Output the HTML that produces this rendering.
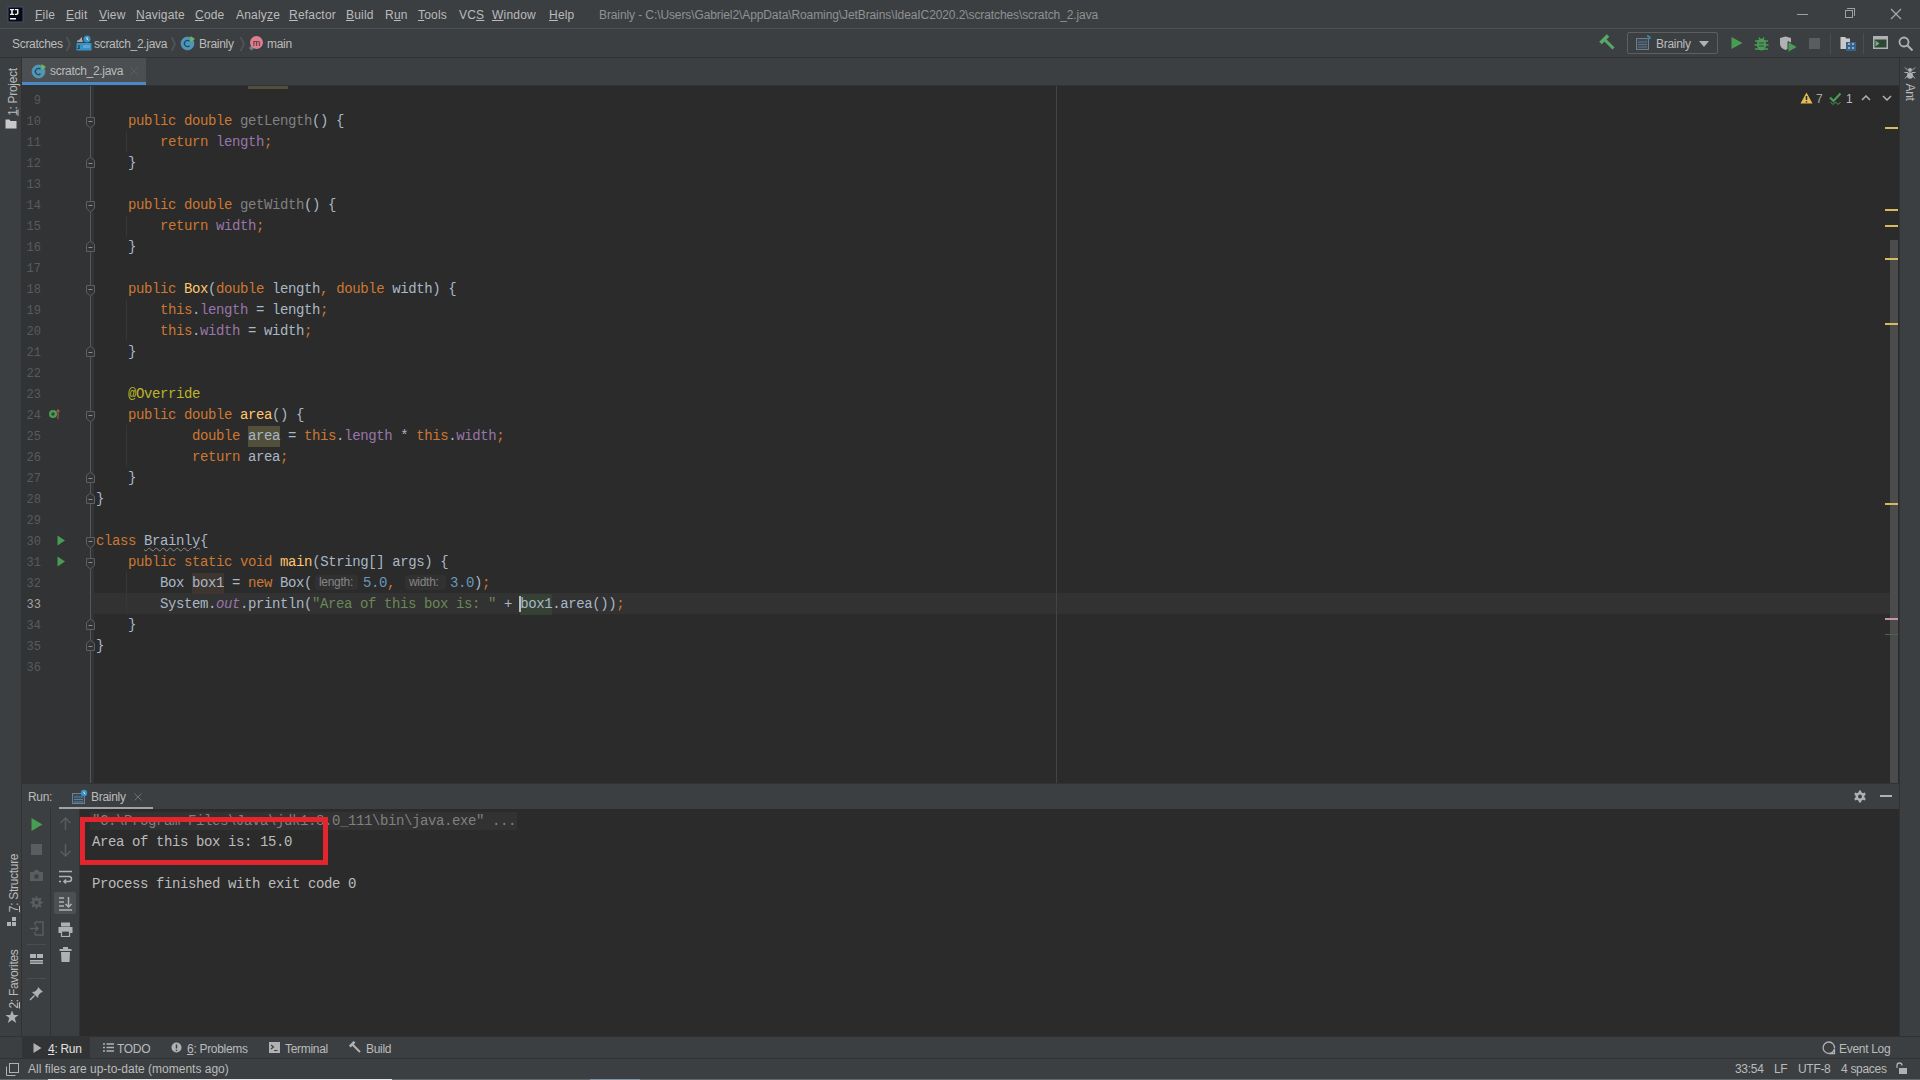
<!DOCTYPE html>
<html><head><meta charset="utf-8">
<style>
*{margin:0;padding:0;box-sizing:border-box}
html,body{width:1920px;height:1080px;overflow:hidden;background:#3c3f41;font-family:"Liberation Sans",sans-serif;color:#bbbbbb}
.a{position:absolute}
#title{left:0;top:0;width:1920px;height:29px;background:#3c3f41;border-bottom:1px solid #4f5254}
#nav{left:0;top:29px;width:1920px;height:29px;background:#3c3f41;border-bottom:1px solid #323232}
#lstripe{left:0;top:58px;width:22px;height:979px;background:#3c3f41;border-right:1px solid #323232}
#rstripe{left:1899px;top:58px;width:21px;height:979px;background:#3c3f41;border-left:1px solid #323232}
#tabs{left:22px;top:58px;width:1877px;height:28px;background:#3c3f41;border-bottom:1px solid #323232}
#editor{left:22px;top:86px;width:1877px;height:697px;background:#2b2b2b;overflow:hidden}
#gutter{left:0;top:0;width:72px;height:697px;background:#313335}
#runhdr{left:22px;top:783px;width:1877px;height:26px;background:#3c3f41;border-top:1px solid #323232}
#runtb1{left:22px;top:809px;width:29px;height:228px;background:#3c3f41;border-right:1px solid #323232}
#runtb2{left:51px;top:809px;width:29px;height:228px;background:#3c3f41;border-right:1px solid #323232}
#console{left:80px;top:809px;width:1819px;height:228px;background:#2b2b2b}
#bbar{left:0;top:1036px;width:1920px;height:22px;background:#3c3f41;border-top:1px solid #323232}
#status{left:0;top:1058px;width:1920px;height:22px;background:#3c3f41;border-top:1px solid #323232}
.ui{font-size:12px;line-height:14px;letter-spacing:-0.3px;color:#bbbbbb;white-space:nowrap}
.code{font-family:"Liberation Mono",monospace;font-size:14px;letter-spacing:-0.4px;white-space:pre;color:#a9b7c6}
.ln{font-family:"Liberation Mono",monospace;font-size:12.5px;color:#606366;text-align:right;width:20px}
.k{color:#cc7832}.f{color:#9876aa}.m{color:#ffc66d}.s{color:#6a8759}.n{color:#6897bb}.an{color:#bbb529}.g{color:#808080}
.ln{position:absolute;left:0;width:19px;margin-top:1.5px;font-family:"Liberation Mono",monospace;font-size:12px;line-height:21px;color:#585b5e;text-align:right}
.ln.cur{color:#a4a3a3}
.cl{left:74px;line-height:21px}
.code{line-height:21px;margin-top:1px}
.hl,.hl2,.hlw{display:inline-block;vertical-align:top;height:21px;line-height:21px}
.hl{background:#52503a}
.hl2{background:#344134}
.hlw{background:#3e3530}
.wavy{text-decoration:underline wavy #8c8c8c;text-decoration-thickness:1px;text-underline-offset:2px}
.fi{font-style:italic;color:#9876aa}
.hint{font-family:"Liberation Sans",sans-serif;font-size:12px;letter-spacing:-0.3px;color:#858585;background:#313131;border-radius:3px;height:15px;line-height:15px;padding-left:4px;white-space:nowrap}
.menu{letter-spacing:0.2px}
</style></head><body>
<div id="title" class="a">
<svg class="a" style="left:7px;top:6px" width="17" height="17"><rect x="0.5" y="0.5" width="16" height="16" fill="#3e5070"/><rect x="1.5" y="1.5" width="14" height="14" fill="#080a16"/><path d="M3 3H7V4.3H5.8V7.7H7V9H3V7.7H4.2V4.3H3Z" fill="#f0f0f0"/><path d="M7.8 3H11.5V7.3C11.5 8.4 10.7 9 9.6 9H7.8V7.7H9.3C9.8 7.7 10 7.5 10 7V4.3H7.8Z" fill="#f0f0f0"/><rect x="3" y="12" width="6" height="1.5" fill="#f0f0f0"/></svg>
<div class="a ui menu" style="left:35px;top:8px"><u>F</u>ile</div>
<div class="a ui menu" style="left:66px;top:8px"><u>E</u>dit</div>
<div class="a ui menu" style="left:99px;top:8px"><u>V</u>iew</div>
<div class="a ui menu" style="left:136px;top:8px"><u>N</u>avigate</div>
<div class="a ui menu" style="left:195px;top:8px"><u>C</u>ode</div>
<div class="a ui menu" style="left:236px;top:8px">Analy<u>z</u>e</div>
<div class="a ui menu" style="left:289px;top:8px"><u>R</u>efactor</div>
<div class="a ui menu" style="left:346px;top:8px"><u>B</u>uild</div>
<div class="a ui menu" style="left:385px;top:8px">R<u>u</u>n</div>
<div class="a ui menu" style="left:418px;top:8px"><u>T</u>ools</div>
<div class="a ui menu" style="left:459px;top:8px">VC<u>S</u></div>
<div class="a ui menu" style="left:492px;top:8px"><u>W</u>indow</div>
<div class="a ui menu" style="left:549px;top:8px"><u>H</u>elp</div>
<div class="a ui" style="left:599px;top:8px;color:#8f9193;letter-spacing:-0.1px">Brainly - C:\Users\Gabriel2\AppData\Roaming\JetBrains\IdeaIC2020.2\scratches\scratch_2.java</div>
<div class="a" style="left:1797px;top:14px;width:11px;height:1px;background:#a0a0a0"></div>
<div class="a" style="left:1845px;top:10px;width:8px;height:8px;border:1px solid #a0a0a0"></div>
<div class="a" style="left:1847px;top:8px;width:8px;height:8px;border-top:1px solid #a0a0a0;border-right:1px solid #a0a0a0"></div>
<svg class="a" style="left:1890px;top:8px" width="12" height="12"><path d="M1 1L11 11M11 1L1 11" stroke="#a8a8a8" stroke-width="1.2"/></svg>
</div>
<div id="nav" class="a">
<div class="a ui" style="left:12px;top:8px">Scratches</div>
<svg class="a" style="left:65px;top:5px" width="7" height="20"><path d="M1.5 3L5 10L1.5 17" stroke="#505355" stroke-width="1.8" fill="none"/></svg>
<svg class="a" style="left:76px;top:6px" width="16" height="16"><rect x="0.5" y="8" width="15" height="7.5" fill="#3592c4"/><path d="M3 10V13.5H1.5" stroke="#1f3a4d" stroke-width="1.2" fill="none"/><rect x="7" y="10" width="7" height="3" fill="#5aa4d6"/><path d="M1 7L6 2V7Z" fill="#c6a3a3"/><circle cx="11" cy="4" r="3.5" fill="#3592c4"/><path d="M11 2V4.3L12.5 5.2" stroke="#e8f0f5" stroke-width="1" fill="none"/><rect x="1" y="5.5" width="6" height="1.5" fill="#9aa7b0"/></svg>
<div class="a ui" style="left:94px;top:8px">scratch_2.java</div>
<svg class="a" style="left:170px;top:5px" width="7" height="20"><path d="M1.5 3L5 10L1.5 17" stroke="#505355" stroke-width="1.8" fill="none"/></svg>
<svg class="a" style="left:180px;top:6px" width="16" height="16"><circle cx="7.5" cy="8.5" r="6.5" fill="#4f97b8"/><circle cx="7.5" cy="8.5" r="6.5" fill="none" stroke="#6aa7c4" stroke-width="0.5"/><path d="M9.5 6.3A3 3 0 1 0 9.5 10.7" stroke="#1d4a5e" stroke-width="1.3" fill="none"/><path d="M10.5 1L15 4L10.5 7Z" fill="#6dba5a"/></svg>
<div class="a ui" style="left:199px;top:8px">Brainly</div>
<svg class="a" style="left:239px;top:5px" width="7" height="20"><path d="M1.5 3L5 10L1.5 17" stroke="#505355" stroke-width="1.8" fill="none"/></svg>
<svg class="a" style="left:248px;top:6px" width="16" height="16"><circle cx="8.5" cy="7.5" r="6.5" fill="#f98b9e" fill-opacity="0.85"/><text x="8.5" y="10.5" font-family="Liberation Sans" font-size="9" fill="#3c1f24" text-anchor="middle">m</text><path d="M1 13L3.5 15.5L6 13L3.5 10.5Z" fill="#9aa7b0" fill-opacity="0.6"/></svg>
<div class="a ui" style="left:267px;top:8px">main</div>
<svg class="a" style="left:1599px;top:5px" width="17" height="17"><path d="M1.5 9L9 1.5" stroke="#59a869" stroke-width="3.5"/><path d="M5 5L14.5 14.5" stroke="#59a869" stroke-width="3"/></svg>
<div class="a" style="left:1627px;top:3px;width:91px;height:22px;border:1px solid #5e6060;border-radius:2px"></div>
<svg class="a" style="left:1636px;top:6px" width="16" height="16"><rect x="0.5" y="3.5" width="12" height="11" fill="#3d4a55" stroke="#6c7e8c"/><path d="M2 7H11M2 9.5H11M2 12H11" stroke="#6c7e8c" stroke-width="0.8"/><path d="M11 1A3 3 0 0 1 14 4" stroke="#3592c4" stroke-width="1.5" fill="none"/></svg>
<div class="a ui" style="left:1656px;top:8px">Brainly</div>
<svg class="a" style="left:1699px;top:12px" width="10" height="6"><path d="M0 0H10L5 6Z" fill="#afb1b3"/></svg>
<svg class="a" style="left:1731px;top:8px" width="12" height="12"><path d="M0.5 0L11.5 6L0.5 12Z" fill="#499c54"/></svg>
<svg class="a" style="left:1754px;top:7px" width="15" height="15"><ellipse cx="7.5" cy="8.5" rx="4.5" ry="6" fill="#499c54"/><path d="M1 5H14M0.5 9H14.5M1 13H14M5 1.5L6 3.5M10 1.5L9 3.5" stroke="#499c54" stroke-width="1.5"/><path d="M5 7H10M5 10H10" stroke="#3c3f41" stroke-width="1.2"/></svg>
<svg class="a" style="left:1779px;top:7px" width="20" height="18"><path d="M1 2L6.5 0.5L12 2V8C12 11 9.5 13 6.5 14C3.5 13 1 11 1 8Z" fill="#afb1b3"/><path d="M6.5 0.5V14" stroke="#3c3f41" stroke-width="0"/><path d="M9 5.5L18.5 11L9 16.5Z" fill="#499c54" stroke="#3c3f41" stroke-width="1"/></svg>
<div class="a" style="left:1809px;top:9px;width:11px;height:11px;background:#5a5c5e"></div>
<div class="a" style="left:1830px;top:4px;width:1px;height:21px;background:#4b4d4f"></div>
<svg class="a" style="left:1840px;top:7px" width="17" height="16"><path d="M0.5 1H5L6.5 2.5H10V13H0.5Z" fill="#c9c9c9"/><rect x="6" y="6" width="10" height="9" fill="#3d6185"/><path d="M8 8H10M12 8H14M8 12H10M12 12H14" stroke="#7fb1dc" stroke-width="2"/></svg>
<div class="a" style="left:1863px;top:4px;width:1px;height:21px;background:#4b4d4f"></div>
<svg class="a" style="left:1873px;top:7px" width="15" height="13"><rect x="0.75" y="0.75" width="13.5" height="11.5" fill="#2f4536" stroke="#afb1b3" stroke-width="1.5"/><rect x="1" y="1" width="13" height="2.5" fill="#afb1b3"/><path d="M2.5 4.5L6.5 7.5L2.5 10.5Z" fill="#6cb37a"/></svg>
<svg class="a" style="left:1898px;top:7px" width="16" height="16"><circle cx="6" cy="6" r="4.5" stroke="#afb1b3" stroke-width="1.8" fill="none"/><path d="M9.5 9.5L14.5 14.5" stroke="#afb1b3" stroke-width="2"/></svg>
</div>
<div id="lstripe" class="a">
<div class="a ui vt" style="left:-16.5px;top:27px;width:57px;text-align:center;transform:rotate(-90deg)"><u>1</u>: Project</div>
<svg class="a" style="left:5px;top:61px" width="12" height="10"><path d="M0.5 0.5H4.5L5.5 2H11.5V9.5H0.5Z" fill="#c9c9c9"/></svg>
<div class="a ui vt" style="left:-22.5px;top:818px;width:72px;text-align:center;transform:rotate(-90deg)"><u>7</u>: Structure</div>
<svg class="a" style="left:7px;top:859px" width="10" height="10"><rect x="5" y="0" width="4" height="4" fill="#afb1b3"/><rect x="0" y="5" width="4" height="4" fill="#afb1b3"/><rect x="5" y="5" width="4" height="4" fill="#afb1b3"/></svg>
<div class="a ui vt" style="left:-22.5px;top:914px;width:72px;text-align:center;transform:rotate(-90deg)"><u>2</u>: Favorites</div>
<svg class="a" style="left:5px;top:952px" width="14" height="14"><path d="M7 0.5L8.8 5H13.5L9.7 8L11.2 13L7 10L2.8 13L4.3 8L0.5 5H5.2Z" fill="#afb1b3"/></svg>
</div>
<div id="rstripe" class="a">
<svg class="a" style="left:4px;top:9px" width="12" height="12"><circle cx="6" cy="3" r="2" fill="#afb1b3"/><ellipse cx="6" cy="8.5" rx="3" ry="3.2" fill="#afb1b3"/><path d="M1 0.5L4 3.5M11 0.5L8 3.5M0.5 5.5H4M11.5 5.5H8M1 11.5L3.5 8.5M11 11.5L8.5 8.5" stroke="#afb1b3" stroke-width="1"/></svg>
<div class="a ui" style="left:-3px;top:27px;width:26px;text-align:center;transform:rotate(90deg)">Ant</div>
</div>
<div id="tabs" class="a">
<div class="a" style="left:0;top:0;width:124px;height:27px;background:#4b4f51"></div>
<div class="a" style="left:0;top:24px;width:124px;height:3px;background:#4a88c7"></div>
<svg class="a" style="left:9px;top:5px" width="16" height="16"><circle cx="7.5" cy="8.5" r="6.5" fill="#4f97b8"/><circle cx="7.5" cy="8.5" r="6.5" fill="none" stroke="#6aa7c4" stroke-width="0.5"/><path d="M9.5 6.3A3 3 0 1 0 9.5 10.7" stroke="#1d4a5e" stroke-width="1.3" fill="none"/><path d="M10.5 1L15 4L10.5 7Z" fill="#6dba5a"/></svg>
<div class="a ui" style="left:28px;top:6px">scratch_2.java</div>
<svg class="a" style="left:108px;top:9px" width="8" height="8"><path d="M0.5 0.5L7.5 7.5M7.5 0.5L0.5 7.5" stroke="#5a5c5e" stroke-width="1"/></svg>
</div>
<div id="editor" class="a">
<div id="gutter" class="a"></div>
<div class="a" style="left:72px;top:507px;width:1796px;height:21px;background:#323232"></div>
<div class="a" style="left:226px;top:0px;width:40px;height:3px;background:#52503a"></div>
<div class="a" style="left:68px;top:0;width:1px;height:697px;background:#555759"></div>
<div class="a" style="left:1034px;top:0;width:1px;height:697px;background:#444444"></div><div class="a" style="left:104px;top:45px;width:1px;height:21px;background:#373737"></div><div class="a" style="left:104px;top:129px;width:1px;height:21px;background:#373737"></div><div class="a" style="left:104px;top:213px;width:1px;height:42px;background:#373737"></div><div class="a" style="left:104px;top:339px;width:1px;height:42px;background:#373737"></div><div class="a" style="left:104px;top:486px;width:1px;height:42px;background:#373737"></div>
<svg class="a" style="left:63px;top:31px" width="11" height="12"><path d="M1.5 0.5H9.5V7.5L5.5 11L1.5 7.5Z" fill="#313335" stroke="#5d5f61"/><path d="M3.5 4.5H7.5" stroke="#8a8a8a"/></svg><svg class="a" style="left:63px;top:115px" width="11" height="12"><path d="M1.5 0.5H9.5V7.5L5.5 11L1.5 7.5Z" fill="#313335" stroke="#5d5f61"/><path d="M3.5 4.5H7.5" stroke="#8a8a8a"/></svg><svg class="a" style="left:63px;top:199px" width="11" height="12"><path d="M1.5 0.5H9.5V7.5L5.5 11L1.5 7.5Z" fill="#313335" stroke="#5d5f61"/><path d="M3.5 4.5H7.5" stroke="#8a8a8a"/></svg><svg class="a" style="left:63px;top:325px" width="11" height="12"><path d="M1.5 0.5H9.5V7.5L5.5 11L1.5 7.5Z" fill="#313335" stroke="#5d5f61"/><path d="M3.5 4.5H7.5" stroke="#8a8a8a"/></svg><svg class="a" style="left:63px;top:451px" width="11" height="12"><path d="M1.5 0.5H9.5V7.5L5.5 11L1.5 7.5Z" fill="#313335" stroke="#5d5f61"/><path d="M3.5 4.5H7.5" stroke="#8a8a8a"/></svg><svg class="a" style="left:63px;top:472px" width="11" height="12"><path d="M1.5 0.5H9.5V7.5L5.5 11L1.5 7.5Z" fill="#313335" stroke="#5d5f61"/><path d="M3.5 4.5H7.5" stroke="#8a8a8a"/></svg><svg class="a" style="left:63px;top:70px" width="11" height="12"><path d="M1.5 11.5H9.5V4.5L5.5 1L1.5 4.5Z" fill="#313335" stroke="#5d5f61"/><path d="M3.5 7.5H7.5" stroke="#8a8a8a"/></svg><svg class="a" style="left:63px;top:154px" width="11" height="12"><path d="M1.5 11.5H9.5V4.5L5.5 1L1.5 4.5Z" fill="#313335" stroke="#5d5f61"/><path d="M3.5 7.5H7.5" stroke="#8a8a8a"/></svg><svg class="a" style="left:63px;top:259px" width="11" height="12"><path d="M1.5 11.5H9.5V4.5L5.5 1L1.5 4.5Z" fill="#313335" stroke="#5d5f61"/><path d="M3.5 7.5H7.5" stroke="#8a8a8a"/></svg><svg class="a" style="left:63px;top:385px" width="11" height="12"><path d="M1.5 11.5H9.5V4.5L5.5 1L1.5 4.5Z" fill="#313335" stroke="#5d5f61"/><path d="M3.5 7.5H7.5" stroke="#8a8a8a"/></svg><svg class="a" style="left:63px;top:406px" width="11" height="12"><path d="M1.5 11.5H9.5V4.5L5.5 1L1.5 4.5Z" fill="#313335" stroke="#5d5f61"/><path d="M3.5 7.5H7.5" stroke="#8a8a8a"/></svg><svg class="a" style="left:63px;top:532px" width="11" height="12"><path d="M1.5 11.5H9.5V4.5L5.5 1L1.5 4.5Z" fill="#313335" stroke="#5d5f61"/><path d="M3.5 7.5H7.5" stroke="#8a8a8a"/></svg><svg class="a" style="left:63px;top:553px" width="11" height="12"><path d="M1.5 11.5H9.5V4.5L5.5 1L1.5 4.5Z" fill="#313335" stroke="#5d5f61"/><path d="M3.5 7.5H7.5" stroke="#8a8a8a"/></svg>
<div class="a ln" style="top:3px">9</div>
<div class="a ln" style="top:24px">10</div>
<div class="a ln" style="top:45px">11</div>
<div class="a ln" style="top:66px">12</div>
<div class="a ln" style="top:87px">13</div>
<div class="a ln" style="top:108px">14</div>
<div class="a ln" style="top:129px">15</div>
<div class="a ln" style="top:150px">16</div>
<div class="a ln" style="top:171px">17</div>
<div class="a ln" style="top:192px">18</div>
<div class="a ln" style="top:213px">19</div>
<div class="a ln" style="top:234px">20</div>
<div class="a ln" style="top:255px">21</div>
<div class="a ln" style="top:276px">22</div>
<div class="a ln" style="top:297px">23</div>
<div class="a ln" style="top:318px">24</div>
<div class="a ln" style="top:339px">25</div>
<div class="a ln" style="top:360px">26</div>
<div class="a ln" style="top:381px">27</div>
<div class="a ln" style="top:402px">28</div>
<div class="a ln" style="top:423px">29</div>
<div class="a ln" style="top:444px">30</div>
<div class="a ln" style="top:465px">31</div>
<div class="a ln" style="top:486px">32</div>
<div class="a ln cur" style="top:507px">33</div>
<div class="a ln" style="top:528px">34</div>
<div class="a ln" style="top:549px">35</div>
<div class="a ln" style="top:570px">36</div>
<div class="a code cl" style="top:24px">    <span class="k">public</span> <span class="k">double</span> <span class="g">getLength</span>() {</div>
<div class="a code cl" style="top:45px">        <span class="k">return</span> <span class="f">length</span><span class="k">;</span></div>
<div class="a code cl" style="top:66px">    }</div>
<div class="a code cl" style="top:108px">    <span class="k">public</span> <span class="k">double</span> <span class="g">getWidth</span>() {</div>
<div class="a code cl" style="top:129px">        <span class="k">return</span> <span class="f">width</span><span class="k">;</span></div>
<div class="a code cl" style="top:150px">    }</div>
<div class="a code cl" style="top:192px">    <span class="k">public</span> <span class="m">Box</span>(<span class="k">double</span> length<span class="k">,</span> <span class="k">double</span> width) {</div>
<div class="a code cl" style="top:213px">        <span class="k">this</span>.<span class="f">length</span> = length<span class="k">;</span></div>
<div class="a code cl" style="top:234px">        <span class="k">this</span>.<span class="f">width</span> = width<span class="k">;</span></div>
<div class="a code cl" style="top:255px">    }</div>
<div class="a code cl" style="top:297px">    <span class="an">@Override</span></div>
<div class="a code cl" style="top:318px">    <span class="k">public</span> <span class="k">double</span> <span class="m">area</span>() {</div>
<div class="a code cl" style="top:339px">            <span class="k">double</span> <span class="hl">area</span> = <span class="k">this</span>.<span class="f">length</span> * <span class="k">this</span>.<span class="f">width</span><span class="k">;</span></div>
<div class="a code cl" style="top:360px">            <span class="k">return</span> area<span class="k">;</span></div>
<div class="a code cl" style="top:381px">    }</div>
<div class="a code cl" style="top:402px">}</div>
<div class="a code cl" style="top:444px"><span class="k">class</span> <span class="wavy">Brainly</span>{</div>
<div class="a code cl" style="top:465px">    <span class="k">public</span> <span class="k">static</span> <span class="k">void</span> <span class="m">main</span>(String[] args) {</div>
<div class="a code cl" style="top:507px">        System.<span class="fi">out</span>.println(<span class="s">&quot;Area of this box is: &quot;</span> + <span class="hl2">box1</span>.area())<span class="k">;</span></div>
<div class="a code cl" style="top:528px">    }</div>
<div class="a code cl" style="top:549px">}</div>
<div class="a code cl" style="top:486px">        Box <span class="hlw">box1</span> = <span class="k">new</span> Box(</div><div class="a hint" style="left:293px;top:489px;width:43px">length:</div><div class="a code" style="left:341px;top:486px"><span class="n">5.0</span><span class="k">,</span></div><div class="a hint" style="left:383px;top:489px;width:41px">width:</div><div class="a code" style="left:428px;top:486px"><span class="n">3.0</span>)<span class="k">;</span></div>
<svg class="a" style="left:26px;top:322px" width="12" height="12"><circle cx="5" cy="6" r="4" fill="#499c54"/><path d="M5 4V8M3 6H7" stroke="#1e3b22" stroke-width="1"/><path d="M10 11V2M8.5 4L10 1.5L11.5 4" stroke="#c75450" stroke-width="1" fill="none"/></svg>
<svg class="a" style="left:35px;top:449px" width="9" height="11"><path d="M0.5 0.5L8 5.5L0.5 10.5Z" fill="#499c54"/></svg>
<svg class="a" style="left:35px;top:470px" width="9" height="11"><path d="M0.5 0.5L8 5.5L0.5 10.5Z" fill="#499c54"/></svg>
<div class="a" style="left:497px;top:510px;width:2px;height:16px;background:#bbbbbb"></div>
<svg class="a" style="left:1778px;top:6px" width="13" height="12"><path d="M6.5 0.5L12.5 11.5H0.5Z" fill="#e0bd50"/><path d="M6.5 4V8M6.5 9.3V10.5" stroke="#2b2b2b" stroke-width="1.5"/></svg>
<div class="a ui" style="left:1794px;top:6px;font-size:12px;color:#a8a8a8">7</div>
<svg class="a" style="left:1807px;top:6px" width="13" height="14"><path d="M1 5.5L4.5 9L11.5 1.5" stroke="#499c54" stroke-width="2.2" fill="none"/><path d="M1.5 10L4 12.5L6.5 10L9 12.5L11.5 10" stroke="#499c54" stroke-width="1" fill="none"/></svg>
<div class="a ui" style="left:1824px;top:6px;font-size:12px">1</div>
<svg class="a" style="left:1839px;top:9px" width="10" height="6"><path d="M1 5L5 1L9 5" stroke="#afb1b3" stroke-width="1.5" fill="none"/></svg>
<svg class="a" style="left:1860px;top:9px" width="10" height="6"><path d="M1 1L5 5L9 1" stroke="#afb1b3" stroke-width="1.5" fill="none"/></svg>
<div class="a" style="left:1868px;top:154px;width:8px;height:543px;background:#4b4b4b"></div>
<div class="a" style="left:1863px;top:41px;width:13px;height:2px;background:#d9b95f"></div>
<div class="a" style="left:1863px;top:123px;width:13px;height:2px;background:#d9b95f"></div>
<div class="a" style="left:1863px;top:139px;width:13px;height:2px;background:#d9b95f"></div>
<div class="a" style="left:1863px;top:172px;width:13px;height:2px;background:#d9b95f"></div>
<div class="a" style="left:1863px;top:237px;width:13px;height:2px;background:#d9b95f"></div>
<div class="a" style="left:1863px;top:417px;width:13px;height:2px;background:#d9b95f"></div>
<div class="a" style="left:1863px;top:532px;width:13px;height:2px;background:#c795a8"></div>
<div class="a" style="left:1863px;top:548px;width:13px;height:1px;background:#3f6b45"></div>
</div>
<div id="runhdr" class="a">
<div class="a ui" style="left:6px;top:6px">Run:</div>
<svg class="a" style="left:50px;top:5px" width="16" height="16"><rect x="0.5" y="4.5" width="12" height="10" fill="#3d4a55" stroke="#6c7e8c"/><path d="M2 8H11M2 10.5H11M2 13H11" stroke="#5a8bb0" stroke-width="0.9"/><circle cx="12" cy="4" r="3.2" fill="#3592c4"/><path d="M12 2.5V4.2L13.3 5" stroke="#e8f0f5" stroke-width="0.9" fill="none"/></svg>
<div class="a ui" style="left:69px;top:6px">Brainly</div>
<svg class="a" style="left:112px;top:9px" width="8" height="8"><path d="M0.5 0.5L7.5 7.5M7.5 0.5L0.5 7.5" stroke="#6e7072" stroke-width="1"/></svg>
<div class="a" style="left:37px;top:23px;width:94px;height:3px;background:#a0a3a6"></div>
<svg class="a" style="left:1831px;top:6px" width="14" height="14"><path fill="#afb1b3" d="M6 0.5H8L8.4 2.3A5 5 0 0 1 10 3.2L11.8 2.6L12.8 4.3L11.4 5.5A5 5 0 0 1 11.4 7.5L12.8 8.7L11.8 10.4L10 9.8A5 5 0 0 1 8.4 10.7L8 12.5H6L5.6 10.7A5 5 0 0 1 4 9.8L2.2 10.4L1.2 8.7L2.6 7.5A5 5 0 0 1 2.6 5.5L1.2 4.3L2.2 2.6L4 3.2A5 5 0 0 1 5.6 2.3Z"/><circle cx="7" cy="6.5" r="2" fill="#3c3f41"/></svg>
<div class="a" style="left:1858px;top:11px;width:12px;height:2px;background:#afb1b3"></div>
</div>
<div id="runtb1" class="a">
<svg class="a" style="left:9px;top:9px" width="12" height="13"><path d="M0.5 0L11.5 6.5L0.5 13Z" fill="#499c54"/></svg>
<div class="a" style="left:9px;top:35px;width:11px;height:11px;background:#5a5c5e"></div>
<svg class="a" style="left:7px;top:60px" width="15" height="13"><path d="M1 3H4.5L6 1H9L10.5 3H14V12H1Z" fill="#5a5c5e"/><circle cx="7.5" cy="7.5" r="2.3" fill="#3c3f41"/></svg>
<svg class="a" style="left:7px;top:86px" width="15" height="15"><path d="M7.5 0.5L9 3.5L12.5 2.5L11.5 6L14.5 7.5L11.5 9L12.5 12.5L9 11.5L7.5 14.5L6 11.5L2.5 12.5L3.5 9L0.5 7.5L3.5 6L2.5 2.5L6 3.5Z" fill="#5a5c5e"/><circle cx="7.5" cy="7.5" r="2" fill="#3c3f41"/></svg>
<svg class="a" style="left:7px;top:112px" width="15" height="15"><path d="M6 1H14V14H6M6 4V1M6 14V11" stroke="#5a5c5e" stroke-width="1.5" fill="none"/><path d="M1 7.5H9M6.5 5L9 7.5L6.5 10" stroke="#5a5c5e" stroke-width="1.5" fill="none"/></svg>
<div class="a" style="left:5px;top:135px;width:19px;height:1px;background:#4b4d4f"></div>
<svg class="a" style="left:7px;top:143px" width="15" height="14"><rect x="1" y="2" width="6" height="4" fill="#afb1b3"/><rect x="8" y="2" width="6" height="4" fill="#afb1b3"/><rect x="1" y="8" width="13" height="4" fill="#afb1b3"/><path d="M1 10H14" stroke="#3c3f41" stroke-width="0.8"/></svg>
<div class="a" style="left:5px;top:169px;width:19px;height:1px;background:#4b4d4f"></div>
<svg class="a" style="left:7px;top:177px" width="15" height="15"><path d="M9 1L14 6L12 6.5L9.5 9L9 12L3 6L6 5.5L8.5 3Z" fill="#afb1b3"/><path d="M5.5 9.5L1 14" stroke="#afb1b3" stroke-width="1.5"/></svg>
</div>
<div id="runtb2" class="a">
<svg class="a" style="left:8px;top:8px" width="13" height="14"><path d="M6.5 1V13M1.5 6L6.5 1L11.5 6" stroke="#5a5c5e" stroke-width="1.5" fill="none"/></svg>
<svg class="a" style="left:8px;top:34px" width="13" height="14"><path d="M6.5 1V13M1.5 8L6.5 13L11.5 8" stroke="#5a5c5e" stroke-width="1.5" fill="none"/></svg>
<svg class="a" style="left:7px;top:61px" width="15" height="14"><path d="M1 1.5H14M1 6.5H11A2.5 2.5 0 0 1 11 11.5H6M8 9.5L6 11.5L8 13.5M1 11.5H3" stroke="#afb1b3" stroke-width="1.5" fill="none"/></svg>
<div class="a" style="left:3px;top:83px;width:22px;height:22px;background:#4c5052;border-radius:2px"></div>
<svg class="a" style="left:7px;top:87px" width="15" height="15"><path d="M1 2H6M1 6H6M1 10H6M1 14H14M10.5 1V11M7.5 8L10.5 11L13.5 8" stroke="#afb1b3" stroke-width="1.5" fill="none"/></svg>
<svg class="a" style="left:7px;top:113px" width="15" height="15"><rect x="3" y="0.5" width="9" height="4" fill="#afb1b3"/><rect x="0.5" y="5" width="14" height="6" fill="#afb1b3"/><rect x="3.5" y="9" width="8" height="5.5" fill="#3c3f41" stroke="#afb1b3" stroke-width="1.2"/></svg>
<svg class="a" style="left:8px;top:138px" width="13" height="16"><rect x="0.5" y="2" width="12" height="2" fill="#afb1b3"/><rect x="4" y="0" width="5" height="2" fill="#afb1b3"/><path d="M2 5H11L10.5 15H2.5Z" fill="#afb1b3"/></svg>
</div>
<div id="console" class="a">
<div class="a" style="left:10px;top:3px;width:427px;height:18px;background:#323232"></div>
<div class="a code" style="left:12px;top:1px;color:#808080">"C:\Program Files\Java\jdk1.8.0_111\bin\java.exe" ...</div>
<div class="a code" style="left:12px;top:22px;color:#bbbbbb">Area of this box is: 15.0</div>
<div class="a code" style="left:12px;top:64px;color:#bbbbbb">Process finished with exit code 0</div>
<div class="a" style="left:0px;top:8px;width:248px;height:48px;border:5px solid #e3262e"></div>
</div>
<div id="bbar" class="a">
<div class="a" style="left:22px;top:0;width:68px;height:21px;background:#313335"></div>
<svg class="a" style="left:33px;top:6px" width="9" height="10"><path d="M0.5 0L8.5 5L0.5 10Z" fill="#afb1b3"/></svg>
<div class="a ui" style="left:48px;top:5px;color:#e0e0e0"><u>4</u>: Run</div>
<svg class="a" style="left:103px;top:6px" width="11" height="10"><path d="M0 1H2M0 4.5H2M0 8H2M3.5 1H11M3.5 4.5H11M3.5 8H11" stroke="#afb1b3" stroke-width="1.5"/></svg>
<div class="a ui" style="left:117px;top:5px">TODO</div>
<svg class="a" style="left:171px;top:5px" width="11" height="11"><circle cx="5.5" cy="5.5" r="5" fill="#afb1b3"/><path d="M5.5 2.5V6.5M5.5 7.8V9" stroke="#3c3f41" stroke-width="1.5"/></svg>
<div class="a ui" style="left:187px;top:5px"><u>6</u>: Problems</div>
<svg class="a" style="left:269px;top:5px" width="11" height="11"><rect x="0" y="0" width="11" height="11" fill="#afb1b3"/><path d="M2 3L4.5 5L2 7M5 8.5H8.5" stroke="#3c3f41" stroke-width="1.2" fill="none"/></svg>
<div class="a ui" style="left:285px;top:5px">Terminal</div>
<svg class="a" style="left:349px;top:4px" width="12" height="12"><path d="M0.8 5.5L5.5 0.8" stroke="#afb1b3" stroke-width="2.6"/><path d="M3.2 3.2L11 11" stroke="#afb1b3" stroke-width="2"/></svg>
<div class="a ui" style="left:366px;top:5px">Build</div>
<svg class="a" style="left:1822px;top:4px" width="14" height="14"><path d="M7 1A5.7 5.7 0 1 0 12.5 7.5V12.5H7" stroke="#afb1b3" stroke-width="1.3" fill="none"/><path d="M7 1A5.7 5.7 0 0 1 12.5 7" stroke="#afb1b3" stroke-width="1.3" fill="none"/></svg>
<div class="a ui" style="left:1839px;top:5px">Event Log</div>
</div>
<div id="status" class="a">
<svg class="a" style="left:6px;top:4px" width="13" height="13"><rect x="3.5" y="0.5" width="9" height="9" fill="none" stroke="#afb1b3"/><path d="M0.5 3.5V12.5H9.5" stroke="#afb1b3" fill="none"/></svg>
<div class="a ui" style="left:28px;top:3px;letter-spacing:0">All files are up-to-date (moments ago)</div>
<div class="a ui" style="left:1735px;top:3px">33:54</div>
<div class="a ui" style="left:1774px;top:3px">LF</div>
<div class="a ui" style="left:1798px;top:3px">UTF-8</div>
<div class="a ui" style="left:1841px;top:3px">4 spaces</div>
<svg class="a" style="left:1895px;top:3px" width="13" height="13"><path d="M2 6V3.5A2.5 2.5 0 0 1 7 3.5" stroke="#afb1b3" stroke-width="1.3" fill="none"/><rect x="4" y="6" width="8" height="6" fill="#afb1b3"/></svg>
<div class="a" style="left:0;top:20px;width:1920px;height:1px;background:#5f6b6a"></div><div class="a" style="left:48px;top:20px;width:344px;height:1px;background:#e6e6e6"></div><div class="a" style="left:590px;top:20px;width:50px;height:1px;background:#7f97a6"></div>
</div>
</body></html>
